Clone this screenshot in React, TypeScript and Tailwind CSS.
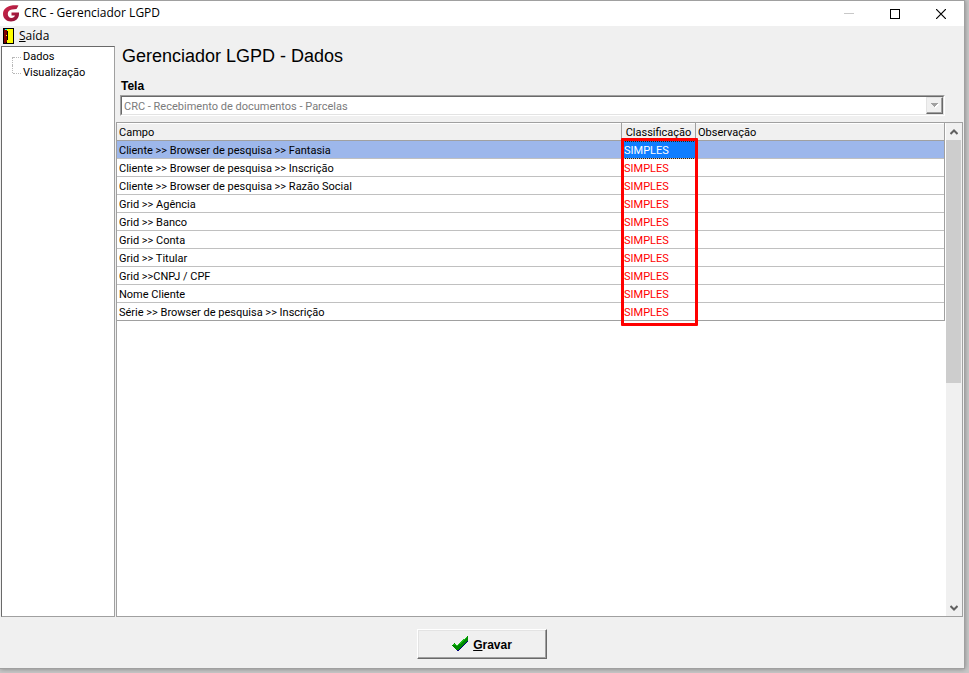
const TREE_ITEMS = ["Dados", "Visualização"];

const FIELDS = [
  "Cliente >> Browser de pesquisa >> Fantasia",
  "Cliente >> Browser de pesquisa >> Inscrição",
  "Cliente >> Browser de pesquisa >> Razão Social",
  "Grid >> Agência",
  "Grid >> Banco",
  "Grid >> Conta",
  "Grid >> Titular",
  "Grid >>CNPJ / CPF",
  "Nome Cliente",
  "Série >> Browser de pesquisa >> Inscrição",
];

function AppLogo() {
  return (
    <svg width="17" height="17" viewBox="0 0 17 17" className="shrink-0">
      <defs>
        <linearGradient id="logo" x1="0" y1="0" x2="1" y2="1">
          <stop offset="0" stopColor="#d3274a" />
          <stop offset="1" stopColor="#8a1238" />
        </linearGradient>
      </defs>
      <path
        d="M15.500 0.500C13 0.200 10 0.300 7.500 0.800C3 1.800 0 5 0 9C0 13.300 3.400 16.500 8 16.500C12.600 16.500 16 13.500 16 9V7.500H8.500V10.500H12C11.500 12 10.200 13 8.500 13C6.200 13 4.800 11.300 4.800 9C4.800 6.500 6.300 4.800 9 4.500L13.500 4Z"
        fill="url(#logo)"
      />
    </svg>
  );
}

function DoorIcon() {
  return (
    <svg width="11" height="16" viewBox="0 0 11 16" shapeRendering="crispEdges" className="shrink-0">
      <rect width="11" height="16" fill="#000" />
      <rect x="4" y="1" width="6" height="14" fill="#ff0" />
      <path d="M1 1H3V2H4V3H5V12H4V14H3V15H1Z" fill="#800000" />
      <rect x="2" y="1" width="2" height="1" fill="#0ff" />
      <rect x="4" y="3" width="1" height="9" fill="#000" />
      <rect x="3" y="7" width="1" height="1" fill="#ff0" />
    </svg>
  );
}

function CheckIcon() {
  return (
    <svg width="17" height="16" viewBox="0 0 17 16" shapeRendering="crispEdges">
      <path d="M1 10L3 8L6 11L14 2L16 1V5L6 15H5L1 11Z" fill="#000080" />
      <path d="M0 9L2 7L5 10L14 1L16 0V4L6 14H4L0 10Z" fill="#008a00" />
      <path d="M1 8H3L5 10L15 1" fill="none" stroke="#19c019" />
    </svg>
  );
}

function TitleBar() {
  return (
    <header className="flex h-[25px] shrink-0 items-center bg-white pl-[3px] font-['Open_Sans',sans-serif] text-[12px] leading-4">
      <AppLogo />
      <span className="ml-1 pb-0.5">CRC - Gerenciador LGPD</span>
      <div className="ml-auto flex h-full">
        <button type="button" disabled aria-label="Minimizar" className="grid w-[46px] place-items-center">
          <svg width="10" height="10" shapeRendering="crispEdges">
            <path d="M0 4.500H10" stroke="#c8c8c8" />
          </svg>
        </button>
        <button type="button" aria-label="Maximizar" className="grid w-[46px] place-items-center">
          <svg width="10" height="10">
            <rect x="0.500" y="0.500" width="9" height="9" fill="none" stroke="#000" />
          </svg>
        </button>
        <button type="button" aria-label="Fechar" className="grid w-[46px] place-items-center">
          <svg width="10" height="10">
            <path d="M0 0L10 10M10 0L0 10" stroke="#000" strokeWidth="1.200" />
          </svg>
        </button>
      </div>
    </header>
  );
}

function Sidebar() {
  return (
    <nav className="w-[114px] shrink-0 border border-l-[#696969] border-t-[#696969] border-r-[#a0a0a0] border-b-[#a0a0a0] bg-white pt-0.5 pl-2.5">
      <ul>
        {TREE_ITEMS.map((item) => (
          <li key={item} className="group flex h-4">
            <span className="mt-2 h-4 w-px border-l border-dotted border-[#b8b8b8] group-last:mt-0 group-last:h-2" />
            <span className="mt-2 mr-0.5 h-0 w-2 border-t border-dotted border-[#b8b8b8]" />
            <a href="#" className="leading-4">
              {item}
            </a>
          </li>
        ))}
      </ul>
    </nav>
  );
}

function ScreenSelect() {
  return (
    <div className="mr-[18px] ml-1 flex h-[21px] border border-t-[#a0a0a0] border-r-white border-b-white border-l-[#a0a0a0]">
      <div className="flex flex-1 border border-t-[#696969] border-r-[#e3e3e3] border-b-[#e3e3e3] border-l-[#696969] bg-white">
        <select
          id="tela"
          disabled
          className="min-w-0 flex-1 appearance-none bg-white pt-0.5 pl-0.5 text-[#7b7b7b] opacity-100"
        >
          <option>CRC - Recebimento de documentos - Parcelas</option>
        </select>
        <span className="grid w-[17px] place-items-center border border-t-[#e3e3e3] border-r-[#696969] border-b-[#696969] border-l-[#e3e3e3] bg-[#f0f0f0] shadow-[inset_-1px_-1px_#a0a0a0]">
          <svg width="8" height="5" shapeRendering="crispEdges">
            <path d="M1 1H8L4.500 5Z" fill="#fff" />
            <path d="M0 0H7L3.500 4Z" fill="#a0a0a0" />
          </svg>
        </span>
      </div>
    </div>
  );
}

function FieldsTable() {
  return (
    <div className="relative flex-1">
      <table className="w-full table-fixed border-separate border-spacing-0 border-r border-[#a0a0a0] text-left leading-[15px]">
        <colgroup>
          <col />
          <col className="w-[74px]" />
          <col className="w-[248px]" />
        </colgroup>
        <thead>
          <tr className="h-[18px] bg-[#f0f0f0]">
            <th className="border-r border-b border-[#a0a0a0] p-0 pt-0.5 pl-0.5 font-normal shadow-[inset_0_1px_white]">
              Campo
            </th>
            <th className="border-r border-b border-[#a0a0a0] p-0 pt-0.5 text-center font-normal shadow-[inset_0_1px_white]">
              Classificação
            </th>
            <th className="border-b border-[#a0a0a0] p-0 pt-0.5 pl-0.5 font-normal shadow-[inset_0_1px_white]">
              Observação
            </th>
          </tr>
        </thead>
        <tbody>
          {FIELDS.map((field) => (
            <tr key={field} className="group h-[18px] first:bg-[#9db7eb]">
              <td className="border-r border-b border-[#c0c0c0] p-0 pt-0.5 pl-0.5 group-last:border-b-[#a0a0a0]">
                {field}
              </td>
              <td className="border-r border-b border-[#c0c0c0] p-0 pt-0.5 pl-0.5 text-[#ff0000] outline-dotted outline-0 -outline-offset-1 outline-[#402000] group-first:bg-[#0f7dff] group-first:text-white group-first:outline-1 group-last:border-b-[#a0a0a0]">
                SIMPLES
              </td>
              <td className="border-b border-[#c0c0c0] p-0 group-last:border-b-[#a0a0a0]" />
            </tr>
          ))}
        </tbody>
      </table>
      <div className="pointer-events-none absolute top-[15px] right-[247px] h-[188px] w-[77px] rounded-[1px] border-3 border-[#ff0000]" />
    </div>
  );
}

function ScrollBar() {
  return (
    <div className="ml-px flex w-4 shrink-0 flex-col bg-[#f0f0f0]">
      <button type="button" aria-label="Rolar para cima" className="flex h-[17px] items-center pl-1">
        <svg width="8" height="6">
          <path d="M0.500 5L4 1.500L7.500 5" fill="none" stroke="#606060" strokeWidth="2" />
        </svg>
      </button>
      <div className="flex-1">
        <div className="mr-px h-[53%] bg-[#cdcdcd]" />
      </div>
      <button type="button" aria-label="Rolar para baixo" className="flex h-[17px] items-center pl-1">
        <svg width="8" height="6">
          <path d="M0.500 1L4 4.500L7.500 1" fill="none" stroke="#606060" strokeWidth="2" />
        </svg>
      </button>
    </div>
  );
}

export default function App() {
  return (
    <div className="h-screen bg-[#c8c8c8] pr-1 pb-1 font-[Roboto,sans-serif] text-[11px] leading-4 text-black">
      <div className="flex h-full flex-col border-t border-r border-b border-[#a0a0a0] bg-[#f0f0f0] shadow-[0_0_5px_#808080]">
        <TitleBar />
        <div className="flex h-5 shrink-0 items-center gap-[5px] pl-[3px] font-['Open_Sans',sans-serif] text-[12px]">
          <DoorIcon />
          <button type="button">
            <u>S</u>aída
          </button>
        </div>
        <div className="flex min-h-0 flex-1 gap-px pl-px">
          <Sidebar />
          <main className="flex min-w-0 flex-1 flex-col pr-px">
            <h1 className="pl-1.5 font-['Liberation_Sans',sans-serif] text-[18px] leading-5">
              Gerenciador LGPD - Dados
            </h1>
            <label
              htmlFor="tela"
              className="mt-3 mb-px pl-[5px] font-['Liberation_Sans',sans-serif] text-[12px] font-bold"
            >
              Tela
            </label>
            <ScreenSelect />
            <section className="mt-1.5 flex min-h-0 flex-1 border border-[#a0a0a0] bg-white">
              <FieldsTable />
              <ScrollBar />
            </section>
          </main>
        </div>
        <footer className="flex h-[51px] shrink-0 items-start justify-center pt-3">
          <button
            type="button"
            className="flex h-[30px] w-[130px] items-center justify-center gap-1 border border-t-white border-r-[#696969] border-b-[#696969] border-l-white font-['Liberation_Sans',sans-serif] text-[12px] font-bold shadow-[inset_-1px_-1px_#a0a0a0,inset_1px_1px_#e3e3e3]"
          >
            <CheckIcon />
            <span className="pt-px">
              <u>G</u>ravar
            </span>
          </button>
        </footer>
      </div>
    </div>
  );
}
